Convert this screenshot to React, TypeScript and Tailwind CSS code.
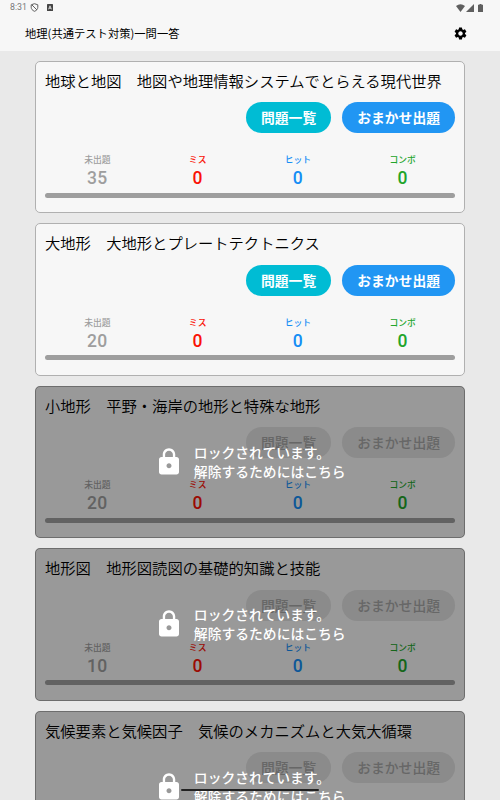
import { MdLock, MdSettings } from 'react-icons/md';

type Deck = {
  title: string;
  remaining: number;
  locked: boolean;
};

const decks: Deck[] = [
  { title: '地球と地図　地図や地理情報システムでとらえる現代世界', remaining: 35, locked: false },
  { title: '大地形　大地形とプレートテクトニクス', remaining: 20, locked: false },
  { title: '小地形　平野・海岸の地形と特殊な地形', remaining: 20, locked: true },
  { title: '地形図　地形図読図の基礎的知識と技能', remaining: 10, locked: true },
  { title: '気候要素と気候因子　気候のメカニズムと大気大循環', remaining: 30, locked: true },
];

function StatusBar() {
  return (
    <div className="h-[15px] flex items-center justify-between pl-[10px] pr-[17px] text-[#5f5f5f]">
      <div className="flex items-center">
        <span className="w-[17px] font-['Roboto'] text-[8.8px] leading-[15px] text-[#777]">8:31</span>
        <svg className="ml-[3px]" width="9" height="9" viewBox="0 0 9 9" fill="none" stroke="currentColor">
          <path d="M4.5 .7 7.8 1.8v2.5c0 1.8-1.3 3.2-3.3 4-2-.8-3.3-2.2-3.3-4V1.8Z" />
          <path d="M2 2 7 7" />
        </svg>
        <svg className="ml-[8px]" width="6" height="7" viewBox="0 0 6 7">
          <rect width="6" height="7" rx=".6" fill="#444" />
          <path d="M1.6 5.3 3 1.8l1.4 3.5M2 4.2h2" fill="none" stroke="#eee" strokeWidth=".8" />
        </svg>
      </div>
      <div className="flex items-center">
        <svg width="9" height="8" viewBox="0 0 9 8" fill="currentColor">
          <path d="M0 2Q4.5-1.6 9 2L4.5 8Z" />
        </svg>
        <svg className="ml-[1px]" width="8" height="8" viewBox="0 0 8 8" fill="currentColor">
          <path d="M8 0v8H0Z" />
        </svg>
        <svg className="ml-[4.5px]" width="5" height="8" viewBox="0 0 5 8" fill="currentColor">
          <path d="M1.5 0h2v.8H5V8H0V.8h1.5Z" />
        </svg>
      </div>
    </div>
  );
}

function Stat({ label, value, color }: { label: string; value: number; color: string }) {
  return (
    <div className={`flex flex-col items-center ${color}`}>
      <span className="text-[8.8px] leading-[14px] font-medium">{label}</span>
      <span className="mt-px font-['Roboto'] text-[17.5px] leading-[21px] font-medium tracking-[0.4px]">{value}</span>
    </div>
  );
}

function DeckCard({ deck }: { deck: Deck }) {
  const pill = 'h-[31px] rounded-full px-[15px] text-[13.8px] leading-[31px]';
  return (
    <div className="relative h-[152.5px] flex-shrink-0 rounded-[5px] border border-[#b0b0b0] bg-[#f7f7f7] px-[9px] pt-[7px]">
      <p className="text-[15.3px] leading-[23px] font-[350] text-black whitespace-nowrap">{deck.title}</p>
      <div className="mt-[10.5px] flex justify-end gap-[11px]">
        <button className={`${pill} ${deck.locked ? 'bg-[#e0e0e0] text-[#a6a6a6] font-medium' : 'bg-[#00bcd4] text-white font-bold'}`}>
          問題一覧
        </button>
        <button className={`${pill} ${deck.locked ? 'bg-[#e0e0e0] text-[#a6a6a6] font-medium' : 'bg-[#2196f3] text-white font-bold'}`}>
          おまかせ出題
        </button>
      </div>
      <div className="mt-[20px] flex justify-around">
        <Stat label="未出題" value={deck.remaining} color="text-[#9e9e9e]" />
        <Stat label="ミス" value={0} color="text-[#fa1206]" />
        <Stat label="ヒット" value={0} color="text-[#148df5]" />
        <Stat label="コンボ" value={0} color="text-[#22a52b]" />
      </div>
      <div className="mt-[3.5px] h-[5px] rounded-full bg-[#9e9e9e]" />

      {deck.locked && (
        <div className="absolute -inset-px flex items-center justify-center gap-[9.5px] rounded-[5px] bg-black/38 text-white">
          <MdLock size={30} />
          <p className="text-[13.8px] leading-[19px] font-medium">
            ロックされています。
            <br />
            解除するためにはこちら
          </p>
        </div>
      )}
    </div>
  );
}

export default function App() {
  return (
    <div className="relative flex h-[800px] w-[500px] flex-col overflow-hidden bg-[#e9e9e9] font-['Noto_Sans_CJK_JP',sans-serif]">
      <header className="h-[51px] flex-shrink-0 bg-[#f7f7f7]">
        <StatusBar />
        <div className="flex h-[36px] items-center justify-between pl-[25px] pr-[32.5px]">
          <h1 className="text-[11.3px] leading-[18px] font-normal text-black">地理(共通テスト対策)一問一答</h1>
          <MdSettings size={15} />
        </div>
      </header>

      <main className="flex flex-col gap-[10px] px-[35px] pt-[9.5px]">
        {decks.map(deck => <DeckCard key={deck.title} deck={deck} />)}
      </main>

      {/* gesture bar */}
      <div className="absolute bottom-[9px] left-[181px] h-[2px] w-[138px] rounded-full bg-[#222]" />
    </div>
  );
}
